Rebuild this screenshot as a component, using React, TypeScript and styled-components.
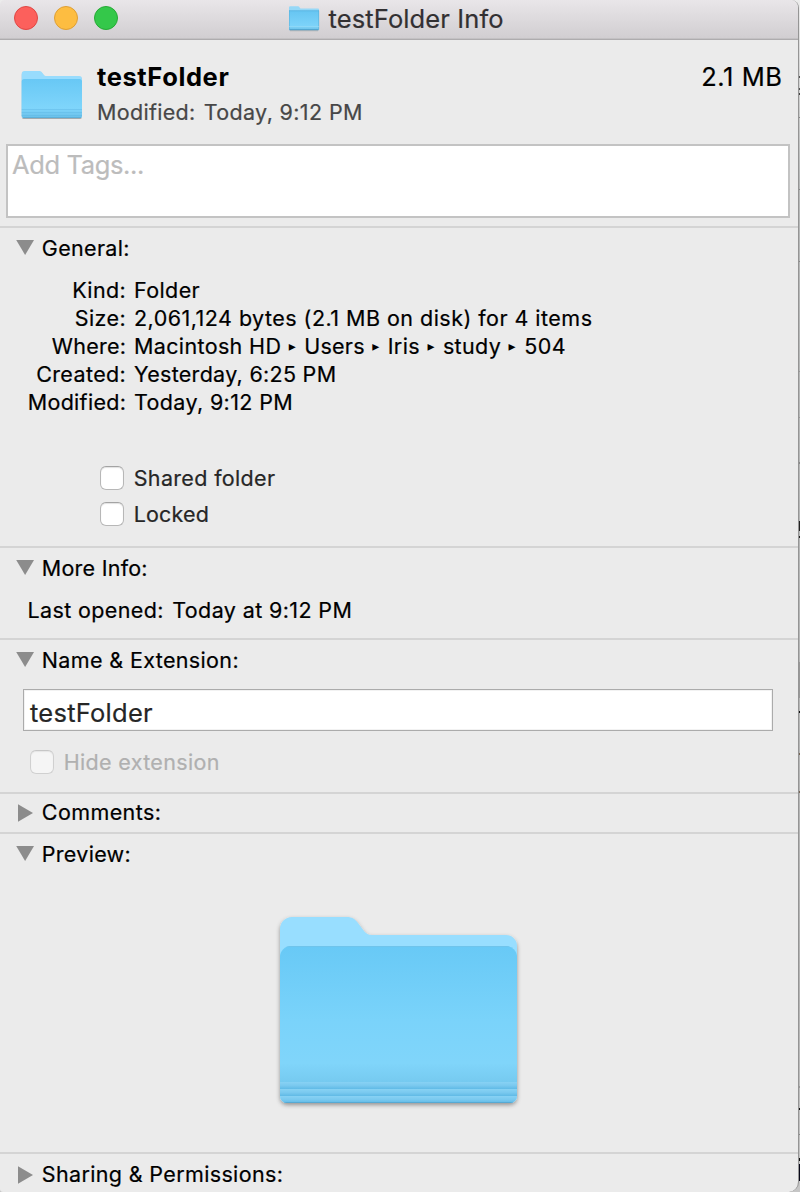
import React from 'react';
import styled, { createGlobalStyle } from 'styled-components';

const Global = createGlobalStyle`
  * { box-sizing: border-box; }
  body { margin: 0; background: #b4b4b4; overflow: hidden; }
`;

const Desktop = styled.div`
  position: relative;
  width: 800px;
  height: 1192px;
  overflow: hidden;
  background: linear-gradient(#ececec 0, #dcdcdc 50px, #b6b8b8 180px, #b4b4b4 1000px, #c6c6c6 1192px);
  font-family: Inter, "Liberation Sans", sans-serif;
  color: #000;
`;

const Window = styled.main`
  width: 799px;
  height: 1192px;
  display: flex;
  flex-direction: column;
  overflow: hidden;
  background: #ebebeb;
  border-right: 1px solid #959595;
  border-radius: 5px 8px 10px 3px;
`;

const Text = styled.span<{ $track?: number }>`
  font-size: 21.5px;
  line-height: 28px;
  white-space: nowrap;
  letter-spacing: ${(p) => p.$track ?? 0.4}px;
  -webkit-text-stroke: 0.2px currentColor;
`;

const LargeText = styled(Text)`
  font-size: 25.5px;
  line-height: 32px;
`;

const TitleBar = styled.header`
  position: relative;
  flex: none;
  height: 40px;
  display: flex;
  align-items: flex-start;
  background: linear-gradient(#e9e6e9, #d1ced1 38px);
  border-bottom: 1px solid #aeacae;
  box-shadow: inset 0 -1px 0 #c3c1c3;
`;

const Lights = styled.div`
  display: flex;
  gap: 16px;
  padding: 6px 0 0 14px;
  width: 289px;
`;

const Light = styled.span<{ $fill: string; $edge: string }>`
  width: 24px;
  height: 24px;
  border-radius: 50%;
  background: ${(p) => p.$fill};
  border: 1px solid ${(p) => p.$edge};
`;

const TitleIcon = styled.div`
  padding-top: 5px;
  width: 39.5px;
  height: 32px;
`;

const WindowTitle = styled(LargeText)`
  padding-top: 3px;
  color: #323032;
`;

const Summary = styled.section`
  flex: none;
  height: 104px;
  display: flex;
  padding: 21px 15.5px 0 21px;
`;

const SummaryIcon = styled.div`
  width: 76px;
  padding-top: 9px;
`;

const SummaryText = styled.div`
  flex: 1;
  display: flex;
  flex-direction: column;
`;

const Name = styled(LargeText)`
  font-weight: 700;
  -webkit-text-stroke: 0;
`;

const ModifiedLine = styled.div`
  display: flex;
  gap: 8px;
  padding-top: 5px;
  color: #474747;
`;

const TagsField = styled.div`
  flex: none;
  height: 74px;
  margin: 0 8px 8px 6px;
  padding: 3px 0 0 4px;
  background: #fff;
  border: 2px solid #c3c3c3;
  color: #bcbcbc;
`;

const Section = styled.section<{ $height: number; $top?: number }>`
  flex: none;
  height: ${(p) => p.$height}px;
  border-top: 2px solid #d4d4d4;
  padding-top: ${(p) => p.$top ?? 6}px;
`;

const SectionHeader = styled.div`
  display: flex;
  align-items: center;
  height: 28px;
`;

const Disclosure = styled.svg`
  width: 41px;
  height: 28px;
  margin-right: 0.8px;
  flex: none;
  fill: #8c8c8c;
`;

const Details = styled.div`
  display: grid;
  grid-template-columns: 126.2px 1fr;
  grid-auto-rows: 28px;
  column-gap: 7.8px;
  padding: 14px 0 48px;
`;

const Label = styled(Text)`
  text-align: right;
`;

const Path = styled.div`
  display: flex;
`;

const PathArrow = styled.span`
  width: 23px;
  padding-right: 1px;
  text-align: center;
  font: 14px/29px "DejaVu Sans", sans-serif;
`;

const CheckRow = styled.label<{ $indent: number }>`
  display: flex;
  align-items: center;
  height: 28px;
  gap: 9.7px;
  margin-bottom: 8px;
  padding-left: ${(p) => p.$indent}px;
  color: #262626;
`;

const Box = styled.span<{ $disabled?: boolean }>`
  width: 24px;
  height: 24px;
  border-radius: 6px;
  background: #fff;
  border: 1px solid #b7b7b7;
  border-top-color: #a3a3a3;
  box-shadow: inset 0 1px 1px #e2e2e2;
  opacity: ${(p) => (p.$disabled ? 0.5 : 1)};
`;

const Muted = styled(Text)`
  color: #b0b0b0;
`;

const LastOpened = styled.div`
  display: flex;
  gap: 8.5px;
  padding: 14px 0 0 27.6px;
`;

const NameField = styled.div`
  height: 42px;
  margin: 15px 25px 17px 23px;
  padding: 7px 0 0 6px;
  background: #fff;
  border: 1px solid #ababab;
  box-shadow: inset 0 0 0 1px #f2f2f2;
  color: #262626;
`;

const PreviewArea = styled.div`
  padding: 40px 0 0 270px;
`;

function FolderIcon({ size }: { size: 'small' | 'medium' | 'large' }) {
  const id = 'folder-' + size;
  if (size === 'large') {
    return (
      <svg width="258" height="206" viewBox="0 0 258 206" display="block">
        <defs>
          <linearGradient id={id} x1="0" y1="0" x2="0" y2="1">
            <stop offset="0" stopColor="#68c9f6" />
            <stop offset=".55" stopColor="#7ad3fa" />
            <stop offset=".86" stopColor="#80d5fa" />
            <stop offset="1" stopColor="#76caf0" />
          </linearGradient>
          <linearGradient id="band" x1="0" y1="0" x2="0" y2="1">
            <stop offset="0" stopColor="#88d2f4" />
            <stop offset=".5" stopColor="#7ac9ef" />
            <stop offset="1" stopColor="#60bae6" />
          </linearGradient>
          <filter id="shade" x="-5%" y="-5%" width="110%" height="112%">
            <feDropShadow dx="0" dy="2" stdDeviation="2" floodColor="#000" floodOpacity=".38" />
          </filter>
          <clipPath id="front">
            <path d="M10 49a11 11 0 0 1 11-11H236a11 11 0 0 1 11 11V188a7 7 0 0 1-7 7H17a7 7 0 0 1-7-7z" />
          </clipPath>
        </defs>
        <path
          filter="url(#shade)"
          fill="#98deff"
          d="M10 21a12 12 0 0 1 12-12H77c5 0 8 2 11 6l6 8c3 3.500 5 4 9 4H236a11 11 0 0 1 11 11V188a7 7 0 0 1-7 7H17a7 7 0 0 1-7-7z"
        />
        <g clipPath="url(#front)">
          <rect x="10" y="38" width="237" height="136" fill={`url(#${id})`} />
          <rect x="10" y="38" width="237" height="1" fill="#6fc4ec" />
          <rect x="10" y="174" width="237" height="7" fill="url(#band)" />
          <rect x="10" y="181" width="237" height="7" fill="url(#band)" />
          <rect x="10" y="188" width="237" height="7" fill="url(#band)" />
          <rect x="10" y="194" width="237" height="1" fill="#56a9d3" />
        </g>
      </svg>
    );
  }
  if (size === 'medium') {
    return (
      <svg width="64" height="52" viewBox="0 0 64 52" display="block">
        <defs>
          <linearGradient id={id} x1="0" y1="0" x2="0" y2="1">
            <stop offset="0" stopColor="#68c8f5" />
            <stop offset=".75" stopColor="#7fd5fb" />
            <stop offset="1" stopColor="#69bfe9" />
          </linearGradient>
          <filter id="shade-m" x="-8%" y="-8%" width="116%" height="120%">
            <feDropShadow dx="0" dy=".8" stdDeviation=".7" floodColor="#000" floodOpacity=".35" />
          </filter>
        </defs>
        <path
          filter="url(#shade-m)"
          fill="#98dcfd"
          d="M.7 4a3 3 0 0 1 3-3H18c1.500 0 2.200.5 3 1.500l2 2.600c.6.7 1.200 1 2.200 1H58a3 3 0 0 1 3 3V46a2 2 0 0 1-2 2H2.700a2 2 0 0 1-2-2z"
        />
        <path
          fill={`url(#${id})`}
          d="M.7 11.500a2.500 2.500 0 0 1 2.500-2.500H58.500a2.500 2.500 0 0 1 2.500 2.500V46a2 2 0 0 1-2 2H2.700a2 2 0 0 1-2-2z"
        />
        <path d="M.7 39.500H61M.7 42.500H61M.7 45.500H61" stroke="#58b2df" strokeWidth=".7" opacity=".5" />
        <path d="M2 47.600H60" stroke="#58a9d2" strokeWidth=".8" />
      </svg>
    );
  }
  return (
    <svg width="32" height="28" viewBox="0 0 32 28" display="block">
      <defs>
        <linearGradient id={id} x1="0" y1="0" x2="0" y2="1">
          <stop offset="0" stopColor="#66c5f2" />
          <stop offset=".8" stopColor="#7dd3f9" />
          <stop offset="1" stopColor="#6cc0e8" />
        </linearGradient>
      </defs>
      <path
        fill="#96d8f7"
        d="M0 2.500A1.300 1.300 0 0 1 1.300 1.200H8.800c.8 0 1.100.3 1.500.9l.7 1c.3.4.6.5 1.100.5H29a1 1 0 0 1 1 1V25H0z"
      />
      <path fill={`url(#${id})`} d="M0 5.600H30V24a1 1 0 0 1-1 1H1a1 1 0 0 1-1-1z" />
      <path d="M0 5.800H30" stroke="#5bb4df" strokeWidth=".8" />
      <path d="M.3 5.500V24.500M29.700 5.500V24.500" stroke="#58aed8" strokeWidth=".6" />
      <path d="M0 21.600H30" stroke="#9adcf8" strokeWidth=".7" />
      <path d="M.5 24.800H29.500" stroke="#4d9fc9" strokeWidth="1.200" />
      <path d="M1 25.800H29" stroke="#9b9b9b" strokeWidth=".7" opacity=".7" />
    </svg>
  );
}

function Heading({ title, open, track }: { title: string; open?: boolean; track?: number }) {
  return (
    <SectionHeader>
      <Disclosure viewBox="0 0 41 28">
        {open ? <path d="M16.200 6H34L25.100 21z" /> : <path d="M18 6.200V23.800L33 15z" />}
      </Disclosure>
      <Text $track={track}>{title}</Text>
    </SectionHeader>
  );
}

const BackdropMark = styled.i<{ $y: number; $h: number; $color: string }>`
  position: absolute;
  left: 799px;
  top: ${(p) => p.$y}px;
  width: 1px;
  height: ${(p) => p.$h}px;
  background: ${(p) => p.$color};
`;

const marks: [number, number, string][] = [
  [76, 2, '#555'], [88, 2, '#555'], [93, 2, '#444'], [117, 1, '#888'],
  [189, 1, '#888'], [261, 1, '#888'], [371, 1, '#999'], [417, 1, '#999'],
  [462, 2, '#888'], [521, 10, '#222'], [536, 2, '#222'], [662, 36, '#989898'],
  [711, 2, '#111'], [753, 2, '#765'], [791, 2, '#765'], [1086, 2, '#999'],
  [1108, 2, '#111'], [1134, 1, '#888'], [1158, 3, '#111'], [1164, 17, '#080818'],
];

const folders: [string, number][] = [
  ['Macintosh HD', 0.36], ['Users', 0.22], ['Iris', 0.35], ['study', 0.35], ['504', 0.5],
];

export default function App() {
  return (
    <Desktop>
      <Global />
      <Window>
        <TitleBar>
          <Lights>
            <Light $fill="#fc605c" $edge="#e04744" />
            <Light $fill="#fdbd41" $edge="#de9f35" />
            <Light $fill="#34c84a" $edge="#26aa35" />
          </Lights>
          <TitleIcon><FolderIcon size="small" /></TitleIcon>
          <WindowTitle $track={0.12}>testFolder Info</WindowTitle>
        </TitleBar>
        <Summary>
          <SummaryIcon><FolderIcon size="medium" /></SummaryIcon>
          <SummaryText>
            <Name $track={0.6}>testFolder</Name>
            <ModifiedLine>
              <Text $track={0.32}>Modified:</Text>
              <Text $track={0.37}>Today, 9:12 PM</Text>
            </ModifiedLine>
          </SummaryText>
          <LargeText $track={0.55}>2.1 MB</LargeText>
        </Summary>
        <TagsField><LargeText $track={-0.36}>Add Tags...</LargeText></TagsField>

        <Section $height={320}>
          <Heading title="General:" open track={0.32} />
          <Details>
            <Label $track={0.4}>Kind:</Label>
            <Text $track={0.4}>Folder</Text>
            <Label $track={0.45}>Size:</Label>
            <Text $track={0.47}>2,061,124 bytes (2.1 MB on disk) for 4 items</Text>
            <Label $track={0.25}>Where:</Label>
            <Path>
              {folders.map(([name, track], i) => (
                <React.Fragment key={name}>
                  {i > 0 && <PathArrow>▸</PathArrow>}
                  <Text $track={track}>{name}</Text>
                </React.Fragment>
              ))}
            </Path>
            <Label $track={0.38}>Created:</Label>
            <Text $track={0.29}>Yesterday, 6:25 PM</Text>
            <Label $track={0.3}>Modified:</Label>
            <Text $track={0.36}>Today, 9:12 PM</Text>
          </Details>
          <CheckRow $indent={100}><Box /><Text $track={0.34}>Shared folder</Text></CheckRow>
          <CheckRow $indent={100}><Box /><Text $track={0.17}>Locked</Text></CheckRow>
        </Section>

        <Section $height={92}>
          <Heading title="More Info:" open track={0.25} />
          <LastOpened>
            <Text $track={0.36}>Last opened:</Text>
            <Text $track={0.38}>Today at 9:12 PM</Text>
          </LastOpened>
        </Section>

        <Section $height={154}>
          <Heading title="Name & Extension:" open track={0.36} />
          <NameField><LargeText $track={0.25}>testFolder</LargeText></NameField>
          <CheckRow $indent={30}><Box $disabled /><Muted $track={0.34}>Hide extension</Muted></CheckRow>
        </Section>

        <Section $height={40} $top={4}>
          <Heading title="Comments:" track={0.4} />
        </Section>

        <Section $height={320}>
          <Heading title="Preview:" open track={0.3} />
          <PreviewArea><FolderIcon size="large" /></PreviewArea>
        </Section>

        <Section $height={40}>
          <Heading title="Sharing & Permissions:" track={0.35} />
        </Section>
      </Window>
      {marks.map(([y, h, color]) => (
        <BackdropMark key={y} $y={y} $h={h} $color={color} />
      ))}
    </Desktop>
  );
}
